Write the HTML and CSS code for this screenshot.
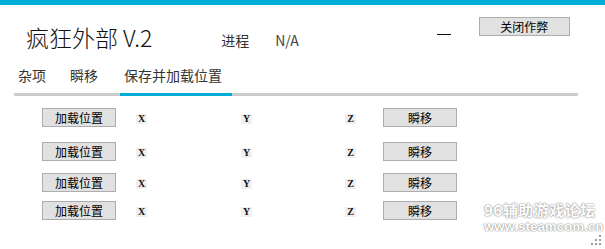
FILE: index.html
```html
<!DOCTYPE html>
<html lang="zh-CN">

<head>
    <meta charset="UTF-8">
    <title>疯狂外部 V.2</title>
    <link rel="stylesheet" href="styles.css">
</head>

<body>
    <div id="window">
        <div class="top-bar"></div>
        <div class="header">
            <h1 class="title">疯狂外部 V.2</h1>
            <span class="proc-label">进程</span>
            <span class="proc-value">N/A</span>
            <span class="minimize"></span>
            <button class="btn close-btn">关闭作弊</button>
        </div>
        <ul class="tabs">
            <li class="tab tab-misc">杂项</li>
            <li class="tab tab-tp">瞬移</li>
            <li class="tab tab-save active">保存并加载位置</li>
        </ul>
        <div class="rows">
            <div class="row">
                <button class="btn load-btn">加载位置</button>
                <span class="axis axis-x">X</span>
                <span class="axis axis-y">Y</span>
                <span class="axis axis-z">Z</span>
                <button class="btn tp-btn">瞬移</button>
            </div>
            <div class="row">
                <button class="btn load-btn">加载位置</button>
                <span class="axis axis-x">X</span>
                <span class="axis axis-y">Y</span>
                <span class="axis axis-z">Z</span>
                <button class="btn tp-btn">瞬移</button>
            </div>
            <div class="row">
                <button class="btn load-btn">加载位置</button>
                <span class="axis axis-x">X</span>
                <span class="axis axis-y">Y</span>
                <span class="axis axis-z">Z</span>
                <button class="btn tp-btn">瞬移</button>
            </div>
            <div class="row">
                <button class="btn load-btn">加载位置</button>
                <span class="axis axis-x">X</span>
                <span class="axis axis-y">Y</span>
                <span class="axis axis-z">Z</span>
                <button class="btn tp-btn">瞬移</button>
            </div>
        </div>

        <!-- 水印 -->
        <div class="watermark">
            <div class="wm-cn">96辅助游戏论坛</div>
            <div class="wm-url">www.steamcom.cn</div>
        </div>
        <svg class="grip" width="10" height="10" viewBox="0 0 10 10">
            <rect x="8" y="0" width="2" height="2" fill="#9a9a9a"/>
            <rect x="4" y="4" width="2" height="2" fill="#9a9a9a"/>
            <rect x="8" y="4" width="2" height="2" fill="#9a9a9a"/>
            <rect x="0" y="8" width="2" height="2" fill="#9a9a9a"/>
            <rect x="4" y="8" width="2" height="2" fill="#9a9a9a"/>
            <rect x="8" y="8" width="2" height="2" fill="#9a9a9a"/>
        </svg>
    </div>
</body>

</html>
```

FILE: styles.css
```css
* {
    margin: 0;
    padding: 0;
    box-sizing: border-box;
}

body {
    background: #fff;
    font-family: "Noto Sans CJK SC", "Noto Sans", sans-serif;
    overflow: hidden;
}

#window {
    position: relative;
    width: 605px;
    height: 249px;
    background: #fff;
}

.top-bar {
    height: 5px;
    background: #00acd8;
}

/* 标题栏 */
.header {
    display: flex;
    align-items: flex-start;
    height: 59px;
}

.title {
    margin: 16px 0 0 26px;
    font-size: 23px;
    font-weight: 300;
    line-height: 32px;
    color: #111;
    white-space: nowrap;
}

.proc-label {
    margin: 25px 0 0 69px;
    font-size: 14px;
    line-height: 20px;
    color: #333;
}

.proc-value {
    margin: 25px 0 0 26px;
    font-size: 14px;
    line-height: 20px;
    color: #444;
}

.minimize {
    width: 14px;
    height: 1px;
    margin: 29px 0 0 138px;
    background: #111;
}

.btn {
    height: 19px;
    border: 1px solid #adadad;
    background: #e1e1e1;
    font-family: "Noto Sans CJK SC", sans-serif;
    font-size: 12px;
    line-height: 16px;
    color: #000;
    text-align: center;
}

.close-btn {
    width: 91px;
    margin: 12px 0 0 28px;
}

/* 选项卡 */
.tabs {
    list-style: none;
    display: flex;
    width: 564px;
    margin-left: 14px;
    border-bottom: 3px solid #cccccc;
}

.tab {
    padding: 0 0 6px 4px;
    margin-bottom: -3px;
    border-bottom: 3px solid transparent;
    font-size: 14px;
    line-height: 23px;
    color: #333;
    white-space: nowrap;
}

.tab-misc {
    width: 52px;
}

.tab-tp {
    width: 54px;
}

.tab-save {
    width: 112px;
}

.tab.active {
    border-bottom-color: #00acd8;
}

/* 位置列表 */
.rows {
    padding: 12px 0 0 42px;
}

.row {
    display: flex;
    align-items: center;
    height: 19px;
}

.row:nth-child(2) {
    margin-top: 15px;
}

.row:nth-child(3) {
    margin-top: 12px;
}

.row:nth-child(4) {
    margin-top: 9px;
}

.load-btn,
.tp-btn {
    width: 74px;
}

.axis {
    width: 11px;
    height: 10px;
    margin-top: 2px;
    background: #f0f0f0;
    font-family: "Liberation Serif", "DejaVu Serif", serif;
    font-size: 10px;
    font-weight: bold;
    line-height: 10px;
    text-align: center;
    color: #111;
}

.axis-x {
    margin-left: 20px;
}

.axis-y {
    margin-left: 94px;
}

.axis-z {
    margin-left: 93px;
}

.tp-btn {
    margin-left: 27px;
}

/* 水印 */
.watermark {
    position: absolute;
    left: 484px;
    top: 201px;
    color: #fff;
    font-family: "Noto Sans CJK SC", sans-serif;
    font-weight: bold;
    text-shadow: 0 0 2px #8a8a8a, 0 0 1px #8a8a8a;
    white-space: nowrap;
}

.wm-cn {
    font-size: 15px;
    line-height: 18px;
    letter-spacing: 0.5px;
}

.wm-url {
    font-family: "Liberation Sans", sans-serif;
    font-size: 13px;
    line-height: 15px;
    letter-spacing: 0.2px;
}

.grip {
    position: absolute;
    right: 4px;
    bottom: 4px;
}
```
